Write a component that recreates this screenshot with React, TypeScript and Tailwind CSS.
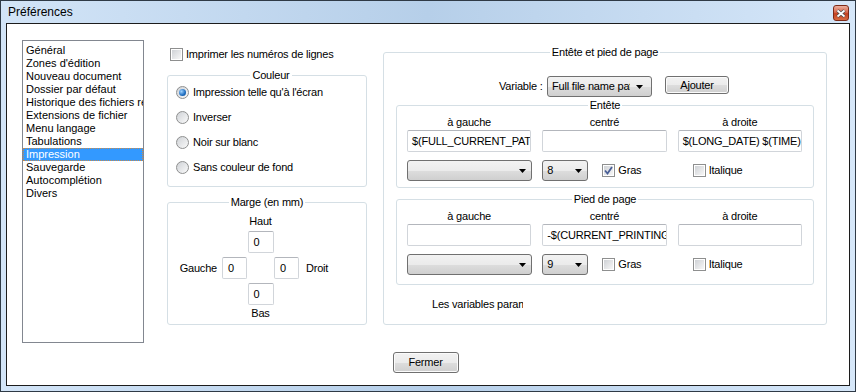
import React from "react";

const btnBg =
  "bg-[linear-gradient(#f2f2f2,#ebebeb_50%,#dddddd_51%,#cfcfcf)]";

const Check = ({ checked = false }: { checked?: boolean }) => (
  <span className="w-[13px] h-[13px] shrink-0 border border-[#8e8f8f] bg-white p-px flex">
    <span className="flex-1 bg-gradient-to-br from-[#cfd2d6] to-[#f7f7f7] flex items-center justify-center">
      {checked && (
        <svg width="9" height="9" viewBox="0 0 9 9">
          <path d="M1 4.5 L3.5 7.5 L8 1" fill="none" stroke="#4a5f97" strokeWidth="1.8" />
        </svg>
      )}
    </span>
  </span>
);

const Radio = ({ checked = false }: { checked?: boolean }) => (
  <span className="w-[13px] h-[13px] shrink-0 rounded-full border border-[#8e8f8f] bg-gradient-to-br from-[#cfd2d6] to-[#fafafa] flex items-center justify-center">
    {checked && (
      <span className="w-[7px] h-[7px] rounded-full bg-[radial-gradient(circle_at_35%_35%,#9fd3ff,#1d6cc0_60%,#0f4c8c)]" />
    )}
  </span>
);

const TextBox = ({ value = "", className = "" }: { value?: string; className?: string }) => (
  <div
    className={`h-[22px] border border-[#d1d5da] border-t-[#b3b6bc] rounded-[2px] bg-white flex items-center overflow-hidden whitespace-nowrap ${className}`}
  >
    {value}
  </div>
);

const Combo = ({ text = "", className = "" }: { text?: string; className?: string }) => (
  <div
    className={`h-[21px] border border-[#707070] rounded-[3px] ${btnBg} flex items-center gap-[6px] pl-[4px] pr-[5px] ${className}`}
  >
    <span className="flex-1 overflow-hidden whitespace-nowrap">{text}</span>
    <svg width="7" height="4" viewBox="0 0 7 4" className="shrink-0">
      <path d="M0 0 H7 L3.5 4 Z" fill="#000" />
    </svg>
  </div>
);

const Button = ({ label, className = "" }: { label: string; className?: string }) => (
  <div
    className={`border border-[#707070] rounded-[3px] ${btnBg} flex items-center justify-center shadow-[inset_0_0_0_1px_#fbfbfb] ${className}`}
  >
    {label}
  </div>
);

const items = [
  "Général",
  "Zones d'édition",
  "Nouveau document",
  "Dossier par défaut",
  "Historique des fichiers récents",
  "Extensions de fichier",
  "Menu langage",
  "Tabulations",
  "Impression",
  "Sauvegarde",
  "Autocomplétion",
  "Divers",
];

type GroupProps = {
  title: string;
  left: string;
  center: string;
  right: string;
  size: string;
  bold: boolean;
  className?: string;
};

const PageGroup = ({ title, left, center, right, size, bold, className = "" }: GroupProps) => (
  <fieldset className={`mx-[12px] border border-[#d5dfe5] rounded-[3px] ${className}`}>
    <legend className="mx-auto px-[2px] leading-[13px]">{title}</legend>
    <div className="grid grid-cols-3 gap-x-[11px] pl-[10px] pr-[11px] mt-[4px] leading-[13px] text-center">
      <span>à gauche</span>
      <span>centré</span>
      <span>à droite</span>
    </div>
    <div className="grid grid-cols-3 gap-x-[11px] pl-[10px] pr-[11px] mt-[1px]">
      <TextBox value={left} className="pl-[4px]" />
      <TextBox value={center} className="pl-[4px]" />
      <TextBox value={right} className="pl-[4px]" />
    </div>
    <div className="grid grid-cols-3 gap-x-[11px] pl-[10px] pr-[11px] mt-[8px]">
      <Combo className="w-[125px]" />
      <div className="flex items-center">
        <Combo text={size} className="w-[46px]" />
        <span className="ml-[14px] flex items-center gap-[3px]">
          <Check checked={bold} />
          Gras
        </span>
      </div>
      <div className="flex items-center pl-[15px] gap-[3px]">
        <Check />
        Italique
      </div>
    </div>
  </fieldset>
);

const App = () => {
  return (
    <div className="w-[856px] h-[392px] border border-[#2f3a46] bg-gradient-to-r from-[#d2e4f7] via-[#b6cfe9] to-[#d6e7f9] flex flex-col px-[5px] pb-[5px] text-[11px] text-black font-['Liberation_Sans',Arial,sans-serif] tracking-[-0.2px]">
      <div className="h-[22px] flex items-start justify-between">
        <span className="pl-[2px] pt-[4px] text-[12px] leading-[15px] tracking-normal">Préférences</span>
        <div className="mt-[4px] mr-[1px] w-[16px] h-[16px] rounded-[3px] border border-[#7d2a18] bg-[linear-gradient(#eab0a0,#d8664a_45%,#c2401f_55%,#d86a40)] flex items-center justify-center">
          <svg width="10" height="9" viewBox="0 0 10 9">
            <path d="M1.5 1.5 L8.5 7.5 M8.5 1.5 L1.5 7.5" stroke="#4a4a4a" strokeWidth="3.4" />
            <path d="M1.5 1.5 L8.5 7.5 M8.5 1.5 L1.5 7.5" stroke="#fff" strokeWidth="1.8" />
          </svg>
        </div>
      </div>

      <div className="flex-1 border border-[#1c1c1c] bg-white flex flex-col">
        <div className="flex items-start pt-[16px] pl-[15px]">
          {/* liste des sections */}
          <div className="w-[122px] h-[303px] border border-[#828790] pt-[3px] overflow-hidden tracking-normal">
            {items.map((it) => (
              <div
                key={it}
                className={`h-[13px] leading-[13px] pl-[3px] whitespace-nowrap ${
                  it === "Impression"
                    ? "bg-[#3399ff] text-white outline outline-1 outline-dotted outline-[#c98a4a] -outline-offset-1"
                    : ""
                }`}
              >
                {it}
              </div>
            ))}
          </div>

          {/* colonne du milieu */}
          <div className="ml-[23px] w-[200px] flex flex-col">
            <div className="mt-[7px] h-[14px] pl-[3px] flex items-center gap-[3px]">
              <Check />
              Imprimer les numéros de lignes
            </div>

            <fieldset className="mt-[8px] border border-[#d5dfe5] rounded-[3px] pl-[8px] pb-[6px]">
              <legend className="mx-auto px-[2px] leading-[13px]">Couleur</legend>
              <div className="-mt-[2px] flex flex-col">
                {[
                  "Impression telle qu'à l'écran",
                  "Inverser",
                  "Noir sur blanc",
                  "Sans couleur de fond",
                ].map((r, i) => (
                  <div key={r} className="h-[25px] flex items-center gap-[4px]">
                    <Radio checked={i === 0} />
                    {r}
                  </div>
                ))}
              </div>
            </fieldset>

            <fieldset className="mt-[9px] border border-[#d5dfe5] rounded-[3px] pb-[4px]">
              <legend className="mx-auto px-[2px] leading-[13px]">Marge (en mm)</legend>
              <div className="flex flex-col items-center pr-[13px]">
                <span className="mt-[6px] leading-[13px]">Haut</span>
                <TextBox value="0" className="mt-[3px] w-[26px] pl-[5px]" />
                <div className="mt-[4px] h-[22px] flex items-center">
                  <span className="w-[50px] text-right pr-[5px]">Gauche</span>
                  <TextBox value="0" className="w-[25px] pl-[5px]" />
                  <span className="w-[27px]" />
                  <TextBox value="0" className="w-[25px] pl-[5px]" />
                  <span className="w-[50px] pl-[7px]">Droit</span>
                </div>
                <TextBox value="0" className="mt-[4px] w-[26px] pl-[5px]" />
                <span className="mt-[2px] leading-[13px]">Bas</span>
              </div>
            </fieldset>
          </div>

          {/* entête et pied de page */}
          <fieldset className="ml-[16px] mt-[6px] w-[444px] border border-[#d5dfe5] rounded-[3px] pb-[13px]">
            <legend className="mx-auto px-[2px] leading-[13px]">Entête et pied de page</legend>
            <div className="mt-[17px] ml-[115px] flex items-start">
              <span className="w-[48px] h-[21px] leading-[21px] whitespace-nowrap">Variable :</span>
              <Combo text="Full file name path" className="w-[105px] pr-[8px]" />
              <Button label="Ajouter" className="ml-[13px] w-[64px] h-[18px]" />
            </div>
            <PageGroup
              title="Entête"
              left="$(FULL_CURRENT_PATH)"
              center=""
              right="$(LONG_DATE) $(TIME)"
              size="8"
              bold
              className="mt-[2px] pb-[6px]"
            />
            <PageGroup
              title="Pied de page"
              left=""
              center="-$(CURRENT_PRINTING_PAGE)-"
              right=""
              size="9"
              bold={false}
              className="mt-[5px] pb-[9px]"
            />
            <div className="mt-[13px] ml-[48px] w-[91px] leading-[13px] overflow-hidden whitespace-nowrap">
              Les variables paramétrables
            </div>
          </fieldset>
        </div>

        <div className="mt-[9px] flex justify-center pr-[5px]">
          <Button label="Fermer" className="w-[66px] h-[21px]" />
        </div>
      </div>
    </div>
  );
};

export default App;
